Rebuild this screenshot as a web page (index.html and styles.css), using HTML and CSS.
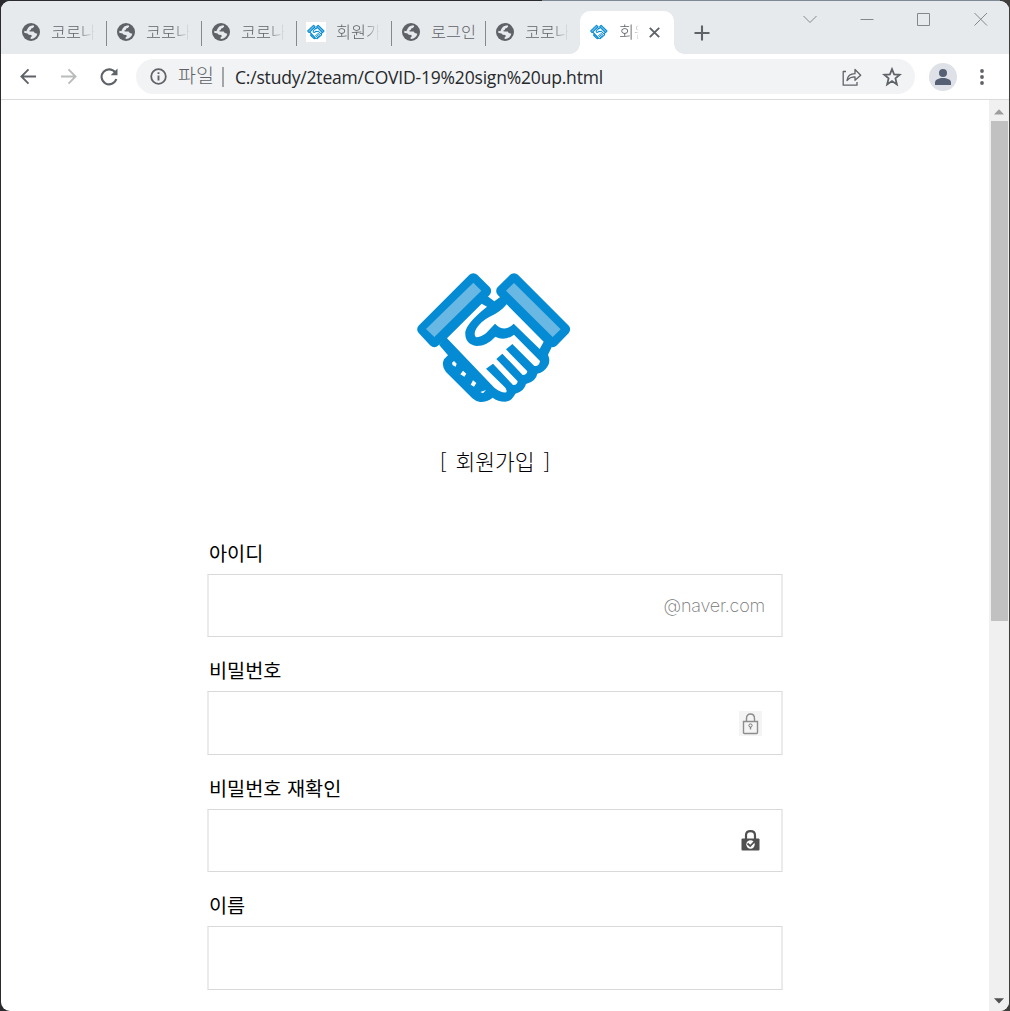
FILE: index.html
```html
<!DOCTYPE html>
<html lang="ko">
<head>
<meta charset="utf-8">
<title>회원가입</title>
<link rel="stylesheet" href="styles.css">
</head>
<body>
<svg class="defs" width="0" height="0">
  <symbol id="globe" viewBox="0 0 18 18">
    <circle cx="9" cy="9" r="9" fill="#5f6368"/>
    <path d="M5.200 6.600C6 4.200 8 2.400 11.500 2.200L12.200 3.500 10.800 5 9.200 5.500 8.700 7 7.300 7.600 7.700 8.500H11.600L12.800 10 15.300 10.700C14.800 13.500 12.500 15.700 9 16L8.300 15 9.800 13.200 9.300 12 6.800 11.800 5.500 10.500 2.200 9.700 2.400 7.700 4.300 8.200Z" fill="#e7eaed"/>
  </symbol>
  <symbol id="handshake" viewBox="0 0 540 465">
    <path fill="#058bd3" d="M225 105 242 104 268 124 290 108 350 120 440 262 429 284Q438 305 427 320 417 336 397 341 393 364 363 372 357 395 331 401 319 425 300 425 278 425 263 413 245 427 225 426 212 424 202 415L123 336Q108 318 117 298L129 286 102 254Z"/>
    <g fill="#058bd3" stroke="#058bd3" stroke-width="33" stroke-linejoin="round">
      <path d="M205 56 242 93 88 245 53 208Z"/><path d="M327 56 479 208 443 245 290 93Z"/>
    </g>
    <path fill="#69b7e3" d="M205 68 229 92 88 231 63 207ZM327 69 467 208 443 231 303 92Z"/>
    <g fill="#fff">
      <path d="M230 131 126 235 268 383Q288 399 304 397 308 387 295 377L243 326 264 311 324 375Q337 376 338 364L274 297 292 281 353 345Q366 345 367 334L303 268 322 252 388 318Q403 320 405 303L327 224Q298 245 271 230 247 257 215 258 178 252 181 215 187 187 246 140Z"/>
      <path d="M305 133 416 245 404 267 326 191Q299 220 270 191L243 220Q227 232 213 232 204 221 215 204 229 183 254 170 285 158 305 133Z"/>
      <path d="M147 303 155 311 152 320 143 316 141 308ZM174 332 184 341 178 350 166 343ZM204 361 214 369 207 380 197 374ZM226 396 243 390 234 400Z"/>
    </g>
  </symbol>
</svg>
<div class="window">
  <header class="tabs">
    <div class="tab"><svg class="fav"><use href="#globe"/></svg><span class="name">코로나</span></div>
    <div class="tab"><svg class="fav"><use href="#globe"/></svg><span class="name">코로나</span></div>
    <div class="tab"><svg class="fav"><use href="#globe"/></svg><span class="name">코로나</span></div>
    <div class="tab"><svg class="fav hand boxed" viewBox="5 -32 530 530"><use href="#handshake" width="540" height="465"/></svg><span class="name">회원가</span></div>
    <div class="tab"><svg class="fav"><use href="#globe"/></svg><span class="name full">로그인</span></div>
    <div class="tab last"><svg class="fav"><use href="#globe"/></svg><span class="name">코로나</span></div>
    <div class="tab active"><svg class="fav hand" viewBox="5 -32 530 530"><use href="#handshake" width="540" height="465"/></svg><span class="name short">회원</span>
      <svg class="close" viewBox="0 0 11 11"><path d="M.8.8 10.200 10.200M10.200.8.8 10.200" stroke="#5f6368" stroke-width="1.900"/></svg></div>
    <svg class="plus" viewBox="0 0 16 16"><path d="M8 .5V15.500M.5 8H15.500" stroke="#5f6368" stroke-width="2.100"/></svg>
    <div class="controls">
      <svg viewBox="0 0 14 14"><path d="M.5 4 7 10.500 13.500 4"/></svg>
      <svg viewBox="0 0 14 14"><path d="M.5 7.500H13.500"/></svg>
      <svg viewBox="0 0 14 14"><path d="M.5 1.500H12.500V13.500H.5Z"/></svg>
      <svg viewBox="0 0 14 14"><path d="M.5 1 13 13.500M13 1 .5 13.500"/></svg>
    </div>
  </header>
  <nav class="toolbar">
    <svg class="nav" viewBox="0 0 18 18"><path d="M17 9H2M9 1.500 1.500 9 9 16.500" fill="none" stroke="#5f6368" stroke-width="2"/></svg>
    <svg class="nav" viewBox="0 0 18 18"><path d="M1 9H16M9 1.500 16.500 9 9 16.500" fill="none" stroke="#b9bbbd" stroke-width="2"/></svg>
    <svg class="nav" viewBox="0 0 18 18"><path d="M15.400 4.800A7.500 7.500 0 1 0 16.300 11" fill="none" stroke="#5f6368" stroke-width="2.100"/><path d="M17.500.5V7.300H10.700Z" fill="#5f6368"/></svg>
    <div class="address">
      <svg class="info" viewBox="0 0 17 17"><circle cx="8.500" cy="8.500" r="7.300" fill="none" stroke="#5f6368" stroke-width="1.800"/><path d="M8.500 7.500V12.500M8.500 4.200V6.100" stroke="#5f6368" stroke-width="1.900"/></svg>
      <span class="scheme">파일</span><i class="bar"></i><span class="url">C:/study/2team/COVID-19%20sign%20up.html</span>
      <svg class="share" viewBox="0 0 20 18"><path d="M4 3.500H1.200V17.200H15V14M5 12.500C5.500 8.500 8.200 5.700 13 5.700V1.500L18.700 7.200 13 12.300V8.800C9.500 8.800 7 10 5 12.500Z" fill="none" stroke="#5f6368" stroke-width="1.300" stroke-linejoin="round"/></svg>
      <svg class="star" viewBox="0 0 18 18"><path d="M9 1.900 10.900 6.600 16 7 12.100 10.300 13.400 15.700 9 12.700 4.600 15.700 5.900 10.300 2 7 7.100 6.600Z" fill="none" stroke="#5f6368" stroke-width="1.600"/></svg>
    </div>
    <svg class="avatar" viewBox="0 0 28 28"><circle cx="14" cy="14" r="14" fill="#dee1e7"/><circle cx="14" cy="10" r="4" fill="#566074"/><path d="M6 22V19.500C6 16.500 10 15 14 15S22 16.500 22 19.500V22Z" fill="#566074"/></svg>
    <svg class="dots" viewBox="0 0 4 16"><g fill="#5f6368"><circle cx="2" cy="2" r="1.900"/><circle cx="2" cy="8" r="1.900"/><circle cx="2" cy="14" r="1.900"/></g></svg>
  </nav>
  <div class="view">
    <main class="page">
      <svg class="logo"><use href="#handshake"/></svg>
      <h1>[ <span>회원가입</span> ]</h1>
      <form>
        <label>아이디</label>
        <div class="field"><span class="suffix">@naver.com</span></div>
        <label>비밀번호</label>
        <div class="field"><svg class="lock pale" viewBox="0 0 23 25"><path d="M4.500 10.500H18.500V21.500Q18.500 22.500 17.500 22.500H5.500Q4.500 22.500 4.500 21.500ZM7.500 10V7.500Q7.500 3 11.500 3T15.500 7.500V10M11.500 15V18.500" fill="none" stroke="#8d8d8d" stroke-width="1.400"/><circle cx="11.500" cy="14.500" r="1.600" fill="#f4f4f4" stroke="#777"/></svg></div>
        <label>비밀번호 재확인</label>
        <div class="field"><svg class="lock" viewBox="0 0 23 25"><path d="M7 11V7.500Q7 3.200 11.500 3.200T16 7.500V11" fill="none" stroke="#505050" stroke-width="2.200"/><rect x="2.500" y="10.500" width="18" height="12" rx="1" fill="#505050"/><circle cx="11.500" cy="16.500" r="4.200" fill="#fff"/><path d="M8.500 15.500 11.200 18 16 13" fill="none" stroke="#505050" stroke-width="1.800"/></svg></div>
        <label>이름</label>
        <div class="field"></div>
      </form>
    </main>
    <div class="scroll">
      <svg class="arrow" viewBox="0 0 10 6"><path d="M0 5.500 5 .3 10 5.500Z" fill="#9d9d9d"/></svg>
      <div class="thumb"></div>
      <svg class="arrow down" viewBox="0 0 10 6"><path d="M0 .2H10L5 5.500Z" fill="#505050"/></svg>
    </div>
  </div>
</div>
</body>
</html>
```
FILE: styles.css
```css
* { box-sizing: border-box; }
body {
  margin: 0;
  width: 1010px;
  height: 1011px;
  padding: 1px 1px 0;
  overflow: hidden;
  background: linear-gradient(90deg, #2b2a2e 0 53.700%, #7d8994 53.700% 99%, #3f3e3d 99%);
  font-family: "Noto Sans CJK KR", sans-serif;
}
.defs { position: absolute; }
svg { display: block; flex: none; }
.window {
  height: 1010px;
  display: flex;
  flex-direction: column;
  border-radius: 9px;
  overflow: hidden;
  background: #fff;
}
.tabs {
  height: 53px;
  flex: none;
  display: flex;
  padding: 10px 21px 0 11px;
  background: #e7eaed;
}
.tab {
  width: 95px;
  height: 43px;
  flex: none;
  display: flex;
  align-items: center;
  padding-left: 10px;
  position: relative;
}
.tab:nth-child(n+5) { width: 94px; }
.tab:not(.last):not(.active)::after {
  content: "";
  position: absolute;
  right: 0;
  top: 10px;
  width: 1px;
  height: 25px;
  background: #85898e;
}
.fav { width: 18px; height: 18px; margin-top: -1px; }
.fav.hand { width: 20px; height: 20px; margin-left: -1px; margin-right: -1px; }
.fav.boxed { background: #fff; }
.name {
  width: 44px;
  margin: -3px 0 0 11px;
  overflow: hidden;
  white-space: nowrap;
  color: #5f6368;
  font-size: 16.300px;
  font-weight: 300;
  line-height: 24px;
  -webkit-mask-image: linear-gradient(90deg, #000 65%, transparent);
}
.name.full { width: 46px; -webkit-mask-image: none; }
.name.short { width: 20px; }
.active {
  background: #fff;
  border-radius: 10px 10px 0 0;
}
.active::before {
  content: "";
  position: absolute;
  left: -10px;
  right: -10px;
  bottom: 0;
  height: 10px;
  background:
    radial-gradient(circle at 0 0, transparent 9.500px, #fff 10px) left / 10px 10px no-repeat,
    radial-gradient(circle at 100% 0, transparent 9.500px, #fff 10px) right / 10px 10px no-repeat;
}
.close { width: 11px; height: 11px; margin-left: 10px; }
.plus { width: 16px; height: 16px; margin: 14px 0 0 20px; }
.controls {
  display: flex;
  gap: 43px;
  margin-left: auto;
  margin-top: 1px;
}
.controls svg { width: 14px; height: 14px; fill: none; stroke: #85878a; }
.toolbar {
  height: 46px;
  flex: none;
  display: flex;
  align-items: center;
  border-bottom: 1px solid #d9dbdd;
  padding: 0 25px 0 19px;
}
.nav { width: 17px; height: 17px; margin-right: 23px; }
.nav + .nav + .nav { margin-right: 20px; width: 18px; height: 18px; }
.address {
  width: 779px;
  height: 35px;
  display: flex;
  align-items: center;
  border-radius: 18px;
  background: #f1f3f4;
  padding: 0 13px 0 14px;
  margin-left: -2px;
}
.info { width: 17px; height: 17px; }
.scheme { width: 36px; margin: -3px 0 0 11px; color: #5f6368; font-size: 19.500px; font-weight: 300; line-height: 30px; white-space: nowrap; }
.bar { width: 2px; height: 20px; margin: 0 11px 0 8px; background: #a3a6a9; }
.url {
  color: #27292c;
  font-family: "Open Sans", "Noto Sans", sans-serif;
  font-size: 17.500px;
  letter-spacing: -0.190px;
  white-space: nowrap;
}
.share { width: 20px; height: 18px; margin-left: auto; }
.star { width: 20px; height: 20px; margin-left: 20px; }
.avatar { width: 28px; height: 28px; margin-left: 14px; }
.dots { width: 4px; height: 16px; margin-left: auto; }
.view { flex: 1; min-height: 0; display: flex; }
.page { width: 988px; overflow: hidden; padding-top: 160px; }
.logo { width: 180px; height: 155px; margin-left: 404px; }
h1 {
  margin: 30px 0 0;
  text-align: center;
  font-size: 21.500px;
  font-weight: 300;
  line-height: 32px;
  word-spacing: 3px;
  color: #000;
}
form { width: 576px; margin: 66px 0 0 206px; }
label {
  display: block;
  height: 31px;
  padding-left: 2px;
  font-size: 19.700px;
  font-weight: 400;
  line-height: 20px;
  color: #000;
}
.field {
  height: 63.400px;
  margin-bottom: 23px;
  display: flex;
  align-items: center;
  justify-content: flex-end;
  padding-right: 16px;
  border: 1px solid #d9d9d9;
  border-width: 1px 2px;
  border-left-color: #ebebeb;
  border-right-color: #ebebeb;
}
.suffix { color: #777; font-family: Inter, Roboto, sans-serif; font-size: 18px; font-weight: 200; letter-spacing: -0.200px; }
.lock { width: 23px; height: 25px; margin-right: 3px; }
.pale { background: #f4f4f4; }
.scroll {
  width: 20px;
  display: flex;
  flex-direction: column;
  align-items: center;
  background: #f0f0f0;
  padding: 9px 0 7px;
}
.arrow { width: 10px; height: 6px; }
.thumb { width: 17px; height: 500px; margin: 6px 0 auto 1px; background: #c1c1c1; }
```
